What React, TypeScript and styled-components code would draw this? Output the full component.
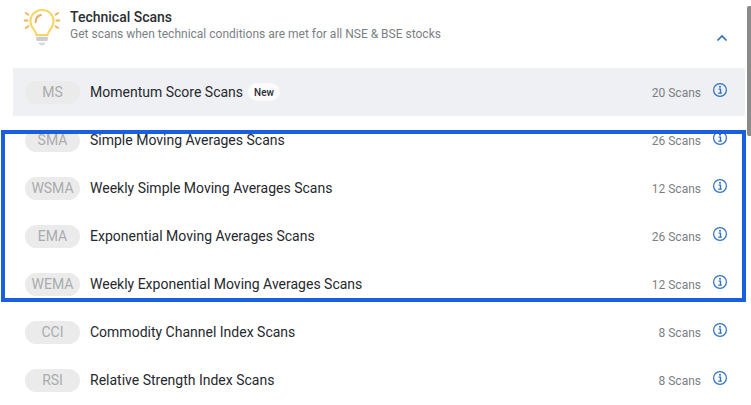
import React from 'react';
import styled, { createGlobalStyle } from 'styled-components';

const GlobalStyle = createGlobalStyle`
  html, body {
    margin: 0;
    padding: 0;
    background: #fff;
    overflow: hidden;
  }
  body {
    font-family: Roboto, "Liberation Sans", sans-serif;
  }
`;

type Scan = { code: string; name: string; count: number; isNew?: boolean };

const topScan: Scan = { code: 'MS', name: 'Momentum Score Scans', count: 20, isNew: true };

const markedScans: Scan[] = [
  { code: 'SMA', name: 'Simple Moving Averages Scans', count: 26 },
  { code: 'WSMA', name: 'Weekly Simple Moving Averages Scans', count: 12 },
  { code: 'EMA', name: 'Exponential Moving Averages Scans', count: 26 },
  { code: 'WEMA', name: 'Weekly Exponential Moving Averages Scans', count: 12 },
];

const otherScans: Scan[] = [
  { code: 'CCI', name: 'Commodity Channel Index Scans', count: 8 },
  { code: 'RSI', name: 'Relative Strength Index Scans', count: 8 },
];

const BulbIcon = () => (
  <svg width="44" height="44" viewBox="0 0 38 38" fill="none">
    <path d="M19 3.500c-6 0-10 4.400-10 9.700 0 3.300 1.500 5.500 3.200 7.600 1.200 1.500 1.800 2.800 2 4.200h9.600c.2-1.400.8-2.700 2-4.200 1.700-2.100 3.200-4.300 3.200-7.600 0-5.300-4-9.700-10-9.700z" stroke="#f8d65e" strokeWidth="1.700" />
    <path d="M13.500 14c0-3.300 1.800-5.500 4.500-6.200" stroke="#f0a860" strokeWidth="1.700" strokeLinecap="round" />
    <path d="M14 26.500h10v2.500c0 .8-.6 1.300-1.300 1.300h-7.400c-.7 0-1.300-.5-1.300-1.300z" fill="#cbcdd0" />
    <path d="M16 31.500h6c-.4 1.600-1.500 2.600-3 2.600s-2.600-1-3-2.600z" fill="#d8d9db" />
    <path d="M4 12.500h2.500M31.500 12.500H34M5 6l2.300 1.600M33 6l-2.300 1.600M5 19l2.300-1.600M33 19l-2.300-1.600" stroke="#f2b25c" strokeWidth="1.600" strokeLinecap="round" />
  </svg>
);

const InfoIcon = () => (
  <svg width="16" height="16" viewBox="0 0 16 16" fill="none">
    <circle cx="8" cy="8" r="6.400" stroke="#2f6fc4" strokeWidth="1.200" />
    <circle cx="8" cy="4.800" r="1" fill="#2f6fc4" />
    <path d="M6.600 7.100h1.900v3.900M6.300 11.200h3.600" stroke="#2f6fc4" strokeWidth="1.300" />
  </svg>
);

const ChevronUp = () => (
  <svg width="12" height="8" viewBox="0 0 12 8" fill="none">
    <path d="M1.500 6.500L6 2l4.500 4.500" stroke="#2f6fc4" strokeWidth="1.700" />
  </svg>
);

const ScanRow: React.FC<{ scan: Scan; active?: boolean; first?: boolean; boxed?: boolean }> = ({
  scan,
  active,
  first,
  boxed,
}) => (
  <Row $active={active} $first={first} $boxed={boxed}>
    <Badge>{scan.code}</Badge>
    <Name>{scan.name}</Name>
    {scan.isNew && <NewTag>New</NewTag>}
    <Count>{scan.count} Scans</Count>
    <InfoSlot>
      <InfoIcon />
    </InfoSlot>
  </Row>
);

const App: React.FC = () => (
  <Page>
    <GlobalStyle />
    <Header>
      <BulbSlot>
        <BulbIcon />
      </BulbSlot>
      <HeaderText>
        <Title>Technical Scans</Title>
        <Subtitle>Get scans when technical conditions are met for all NSE &amp; BSE stocks</Subtitle>
      </HeaderText>
      <Collapse>
        <ChevronUp />
      </Collapse>
    </Header>
    <List>
      <ScanRow scan={topScan} active />
      <Marked>
        {markedScans.map((s, i) => (
          <ScanRow key={s.code} scan={s} first={i === 0} boxed />
        ))}
      </Marked>
      {otherScans.map((s) => (
        <ScanRow key={s.code} scan={s} />
      ))}
    </List>
    <ScrollThumb />
  </Page>
);

const Page = styled.div`
  position: relative;
  width: 751px;
  height: 405px;
  overflow: hidden;
  background: #fff;
`;

const Header = styled.div`
  display: flex;
  height: 68px;
  padding-left: 20px;
  padding-right: 22px;
  box-sizing: border-box;
`;

const BulbSlot = styled.div`
  width: 50px;
  padding-top: 6px;
  flex-shrink: 0;
`;

const HeaderText = styled.div`
  flex: 1;
  padding-top: 9px;
`;

const Title = styled.div`
  font-size: 14px;
  line-height: 17px;
  font-weight: 500;
  color: #2b2f33;
`;

const Subtitle = styled.div`
  font-size: 12px;
  line-height: 17px;
  color: #7b7f84;
`;

const Collapse = styled.div`
  padding-top: 27px;
  padding-right: 1px;
`;

const List = styled.div`
  display: flex;
  flex-direction: column;
  padding-left: 13px;
  padding-right: 6px;
`;

const Marked = styled.div`
  margin: 14px -1px 6px -12px;
  padding-left: 8px;
  height: 172px;
  box-sizing: border-box;
  border: 4px solid #1a5fe0;
  overflow: hidden;
`;

const Row = styled.div<{ $active?: boolean; $first?: boolean; $boxed?: boolean }>`
  display: flex;
  align-items: center;
  height: 48px;
  flex-shrink: 0;
  padding-left: 12px;
  padding-right: 17px;
  box-sizing: border-box;
  background: ${(p) => (p.$active ? '#eef0f3' : 'transparent')};
  margin-top: ${(p) => (p.$first ? '-18px' : '0')};
  margin-right: ${(p) => (p.$boxed ? '-3px' : '0')};
`;

const Badge = styled.div`
  width: 55px;
  height: 23px;
  margin-right: 10px;
  border-radius: 12px;
  background: #ebebeb;
  color: #a9abae;
  font-size: 14px;
  line-height: 23px;
  text-align: center;
  flex-shrink: 0;
`;

const Name = styled.div`
  font-size: 14px;
  color: #26292d;
`;

const NewTag = styled.div`
  margin-left: 5px;
  padding: 0 6px;
  height: 18px;
  line-height: 19px;
  border-radius: 9px;
  background: #fbfbfc;
  font-size: 10px;
  font-weight: 500;
  color: #2b2f33;
`;

const Count = styled.div`
  margin-left: auto;
  font-size: 12px;
  color: #7b7f84;
  padding-top: 2px;
`;

const InfoSlot = styled.div`
  width: 16px;
  height: 16px;
  margin-left: 11px;
  margin-top: -5px;
`;

const ScrollThumb = styled.div`
  position: absolute;
  top: 6px;
  right: 0;
  width: 4px;
  height: 130px;
  background: #8a8a8a;
  border-radius: 2px 0 0 2px;
`;

export default App;
